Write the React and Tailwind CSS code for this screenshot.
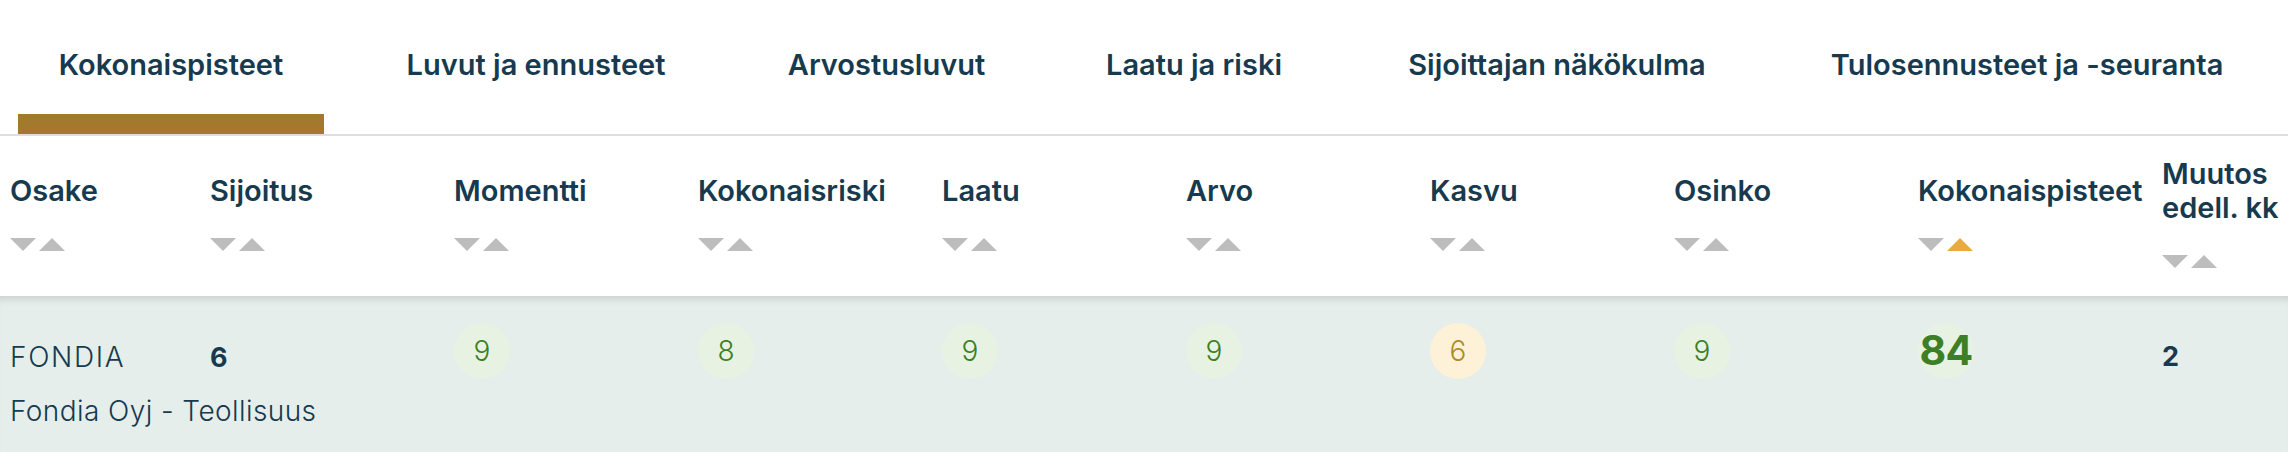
import React from "react";

const NAVY = "text-[#173a4e]";

function Sort({ active }) {
  return (
    <div className="flex items-center gap-[3px] mt-[30px]">
      <span className="w-0 h-0 border-l-[13px] border-r-[13px] border-t-[13px] border-l-transparent border-r-transparent border-t-[#bdbdbd]" />
      <span
        className={
          "w-0 h-0 border-l-[13px] border-r-[13px] border-b-[13px] border-l-transparent border-r-transparent " +
          (active ? "border-b-[#e9ab3e]" : "border-b-[#bdbdbd]")
        }
      />
    </div>
  );
}

function Head({ children, active }) {
  return (
    <div className="flex flex-col justify-center pl-[10px] pb-[8px]">
      <div className={`text-[29px] leading-[34px] font-semibold whitespace-nowrap ${NAVY}`}>{children}</div>
      <Sort active={active} />
    </div>
  );
}

function Score({ v, tone = "green" }) {
  const cls =
    tone === "green"
      ? "bg-[#e7f2e2] text-[#3c7f25]"
      : "bg-[#fdf2d7] text-[#b18a2c]";
  return (
    <div className="pl-[10px] pt-[27px]">
      <div className={`w-[56px] h-[56px] rounded-full flex items-center justify-center text-[28px] font-light ${cls}`}>
        {v}
      </div>
    </div>
  );
}

export default function App() {
  const tabs = [
    ["Kokonaispisteet", "w-[306px]", true],
    ["Luvut ja ennusteet", "w-[344px]", false],
    ["Arvostusluvut", "w-[277px]", false],
    ["Laatu ja riski", "w-[258px]", false],
    ["Sijoittajan näkökulma", "w-[388px]", false],
    ["Tulosennusteet ja -seuranta", "w-[472px]", false],
  ];
  const grid = "grid grid-cols-[200px_repeat(8,244px)_1fr]";
  return (
    <div className="w-[2288px] h-[452px] bg-white overflow-hidden" style={{ fontFamily: "Inter, 'Noto Sans', sans-serif" }}>
      {/* Tabs */}
      <div className="h-[136px] border-b-2 border-[#dedede] flex gap-[40px] pl-[18px]">
        {tabs.map(([t, w, a]) => (
          <div key={t} className={`${w} h-[134px] flex flex-col`}>
            <div className={`pt-[48px] text-center text-[29px] leading-[34px] font-semibold whitespace-nowrap ${NAVY}`}>
              {t}
            </div>
            <div className={`mt-auto h-[20px] ${a ? "bg-[#a5792d]" : ""}`} />
          </div>
        ))}
      </div>

      {/* Header */}
      <div className={`${grid} h-[160px] relative`}>
        <Head>Osake</Head>
        <Head>Sijoitus</Head>
        <Head>Momentti</Head>
        <Head>Kokonaisriski</Head>
        <Head>Laatu</Head>
        <Head>Arvo</Head>
        <Head>Kasvu</Head>
        <Head>Osinko</Head>
        <Head active>Kokonaispisteet</Head>
        <Head>
          Muutos
          <br />
          edell. kk
        </Head>
      </div>

      {/* Row */}
      <div className="bg-[#e5eeeb] h-[160px] shadow-[inset_0_8px_6px_-4px_rgba(0,0,0,0.1)]">
        <div className={`${grid}`}>
          <div className="pl-[10px] pt-[44px] whitespace-nowrap">
            <div className={`text-[28px] leading-[34px] font-light tracking-[0.06em] ${NAVY}`}>FONDIA</div>
            <div className={`mt-[20px] text-[28px] leading-[34px] font-light tracking-[0.015em] ${NAVY}`}>Fondia Oyj - Teollisuus</div>
          </div>
          <div className="pl-[10px] pt-[45px]">
            <div className={`text-[27px] leading-[34px] font-bold ${NAVY}`}>6</div>
          </div>
          <Score v="9" />
          <Score v="8" />
          <Score v="9" />
          <Score v="9" />
          <Score v="6" tone="yellow" />
          <Score v="9" />
          <div className="pl-[10px] pt-[27px]">
            <div className="w-[56px] h-[56px] rounded-full bg-[#e7f2e2] flex items-center justify-center text-[41px] font-bold text-[#3c7f25] tracking-[-0.02em]">
              84
            </div>
          </div>
          <div className="pl-[10px] pt-[44px]">
            <div className={`text-[27px] leading-[34px] font-bold ${NAVY}`}>2</div>
          </div>
        </div>
      </div>
    </div>
  );
}
